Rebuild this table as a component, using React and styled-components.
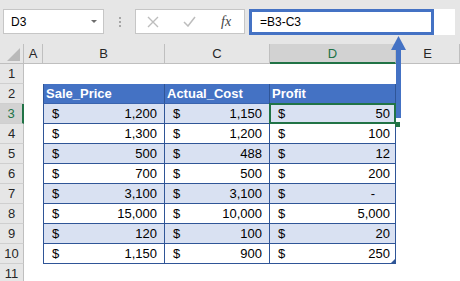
import React from "react";
import styled, { createGlobalStyle, css } from "styled-components";

const GlobalStyle = createGlobalStyle`
  body {
    margin: 0;
    background: #fff;
    font-family: "Liberation Sans", Arial, sans-serif;
  }
`;

const Page = styled.div`
  position: relative;
  width: 460px;
  height: 281px;
  overflow: hidden;
`;

const Toolbar = styled.div`
  height: 44px;
  box-sizing: border-box;
  background: #e6e6e6;
  display: flex;
  align-items: flex-start;
  padding: 9px 0 0 3px;
`;

const NameBox = styled.div`
  width: 101px;
  height: 25px;
  box-sizing: border-box;
  border: 1px solid #c6c6c6;
  background: #fff;
  display: flex;
  align-items: center;
  justify-content: space-between;
  padding: 0 6px 0 7px;
  font-size: 12px;
  color: #000;
`;

const DropArrow = styled.span`
  width: 0;
  height: 0;
  border-left: 3px solid transparent;
  border-right: 3px solid transparent;
  border-top: 3px solid #6d6d6d;
`;

const Grip = styled.div`
  margin: 8px 0 0 15px;
  display: flex;
  flex-direction: column;
  gap: 2px;

  span {
    width: 2px;
    height: 2px;
    background: #a6a6a6;
  }
`;

const FxButtons = styled.div`
  margin-left: 14px;
  width: 110px;
  height: 25px;
  box-sizing: border-box;
  border: 1px solid #c6c6c6;
  background: #fff;
  display: flex;
  align-items: center;
  padding-left: 11px;
  gap: 24px;
`;

const FxLabel = styled.span`
  font-family: "Liberation Serif", "Times New Roman", serif;
  font-style: italic;
  font-size: 14px;
  color: #444;
  margin-left: 1px;
`;

const FormulaBar = styled.div`
  margin-left: 4px;
  width: 206px;
  height: 26px;
  background: #fff;
`;

const FormulaInput = styled.div`
  width: 185px;
  height: 26px;
  box-sizing: border-box;
  border: 3px solid #4472c4;
  display: flex;
  align-items: center;
  padding-left: 8px;
  font-size: 12px;
  color: #000;
`;

const Sheet = styled.div`
  display: grid;
  grid-template-columns: 24px 19px 122px 105px 126px 64px;
  grid-auto-rows: 20px;
`;

const ColHead = styled.div`
  box-sizing: border-box;
  background: #e6e6e6;
  border-right: 1px solid #bfbfbf;
  border-bottom: 1px solid #bfbfbf;
  display: flex;
  align-items: center;
  justify-content: center;
  font-size: 13px;
  color: #262626;
  ${(p) =>
    p.$active &&
    css`
      background: #d2d2d2;
      color: #217346;
      border-bottom: 2px solid #217346;
    `}
`;

const Corner = styled(ColHead)`
  position: relative;

  &::after {
    content: "";
    position: absolute;
    right: 3px;
    bottom: 2px;
    width: 0;
    height: 0;
    border-left: 13px solid transparent;
    border-bottom: 13px solid #b9b9b9;
  }
`;

const RowHead = styled.div`
  box-sizing: border-box;
  background: #e6e6e6;
  border-right: 1px solid #bfbfbf;
  border-bottom: 1px solid #cfcfcf;
  display: flex;
  align-items: center;
  justify-content: center;
  font-size: 13px;
  color: #262626;
  ${(p) =>
    p.$active &&
    css`
      background: #d2d2d2;
      color: #217346;
      border-right: 2px solid #217346;
    `}
`;

const Blank = styled.div`
  background: #fff;
`;

const TableCell = styled.div`
  position: relative;
  box-sizing: border-box;
  display: flex;
  align-items: center;
  justify-content: space-between;
  font-size: 13px;
  color: #000;
  padding: 0 ${(p) => p.$padRight}px 0 8px;
  border-right: 1px solid #2f5597;
  border-bottom: 1px solid #2f5597;
  background: ${(p) => (p.$band ? "#d9e1f2" : "#fff")};
  ${(p) => p.$first && "border-left: 1px solid #2f5597;"}
  ${(p) =>
    p.$head &&
    css`
      background: #4472c4;
      color: #fff;
      font-weight: bold;
      justify-content: flex-start;
      padding-left: 2px;
      border-bottom-color: #3a63ad;
    `}
  ${(p) =>
    p.$selected &&
    css`
      &::before {
        content: "";
        position: absolute;
        inset: -1px;
        border: 2px solid #217346;
        z-index: 2;
      }
      &::after {
        content: "";
        position: absolute;
        right: -5px;
        bottom: -4px;
        width: 5px;
        height: 5px;
        background: #217346;
        z-index: 2;
      }
    `}
  ${(p) =>
    p.$corner &&
    css`
      &::after {
        content: "";
        position: absolute;
        right: 0;
        bottom: 0;
        width: 0;
        height: 0;
        border-left: 4px solid transparent;
        border-bottom: 4px solid #2f5597;
      }
    `}
`;

const Arrow = styled.svg`
  position: absolute;
  left: 390px;
  top: 35px;
  z-index: 3;
`;

const columns = ["A", "B", "C", "D", "E"];
const headers = ["Sale_Price", "Actual_Cost", "Profit"];
const data = [
  [1200, 1150, 50],
  [1300, 1200, 100],
  [500, 488, 12],
  [700, 500, 200],
  [3100, 3100, 0],
  [15000, 10000, 5000],
  [120, 100, 20],
  [1150, 900, 250],
];

const fmt = (n) => (n === 0 ? "-" : n.toLocaleString("en-US"));

const App = () => {
  return (
    <Page>
      <GlobalStyle />
      <Toolbar>
        <NameBox>
          D3
          <DropArrow />
        </NameBox>
        <Grip>
          <span />
          <span />
          <span />
        </Grip>
        <FxButtons>
          <svg width="12" height="12" viewBox="0 0 12 12">
            <path d="M1 1 L11 11 M11 1 L1 11" stroke="#bdbdbd" strokeWidth="1.4" />
          </svg>
          <svg width="13" height="11" viewBox="0 0 13 11">
            <path d="M1 6 L5 10 L12 1" stroke="#bdbdbd" strokeWidth="1.5" fill="none" />
          </svg>
          <FxLabel>fx</FxLabel>
        </FxButtons>
        <FormulaBar>
          <FormulaInput>=B3-C3</FormulaInput>
        </FormulaBar>
      </Toolbar>

      <Sheet>
        <Corner />
        {columns.map((c) => (
          <ColHead key={c} $active={c === "D"}>
            {c}
          </ColHead>
        ))}

        <RowHead>1</RowHead>
        <Blank />
        <Blank />
        <Blank />
        <Blank />
        <Blank />

        <RowHead>2</RowHead>
        <Blank />
        {headers.map((h, i) => (
          <TableCell key={h} $head $first={i === 0} $padRight={4}>
            {h}
          </TableCell>
        ))}
        <Blank />

        {data.map((row, r) => {
          const rowNum = r + 3;
          const band = r % 2 === 0;
          return (
            <React.Fragment key={rowNum}>
              <RowHead $active={rowNum === 3}>{rowNum}</RowHead>
              <Blank />
              {row.map((v, i) => (
                <TableCell
                  key={i}
                  $band={band}
                  $first={i === 0}
                  $selected={rowNum === 3 && i === 2}
                  $corner={rowNum === 10 && i === 2}
                  $padRight={v === 0 ? 20 : i === 2 ? 5 : 7}
                >
                  <span>$</span>
                  <span>{fmt(v)}</span>
                </TableCell>
              ))}
              <Blank />
            </React.Fragment>
          );
        })}

        <RowHead>11</RowHead>
        <Blank />
        <Blank />
        <Blank />
        <Blank />
        <Blank />
      </Sheet>

      <Arrow width="17" height="85" viewBox="0 0 17 85">
        <rect x="6" y="14" width="5" height="69" fill="#4472c4" />
        <polygon points="1,15 8.5,1 16,15" fill="#4472c4" />
      </Arrow>
    </Page>
  );
};

export default App;
